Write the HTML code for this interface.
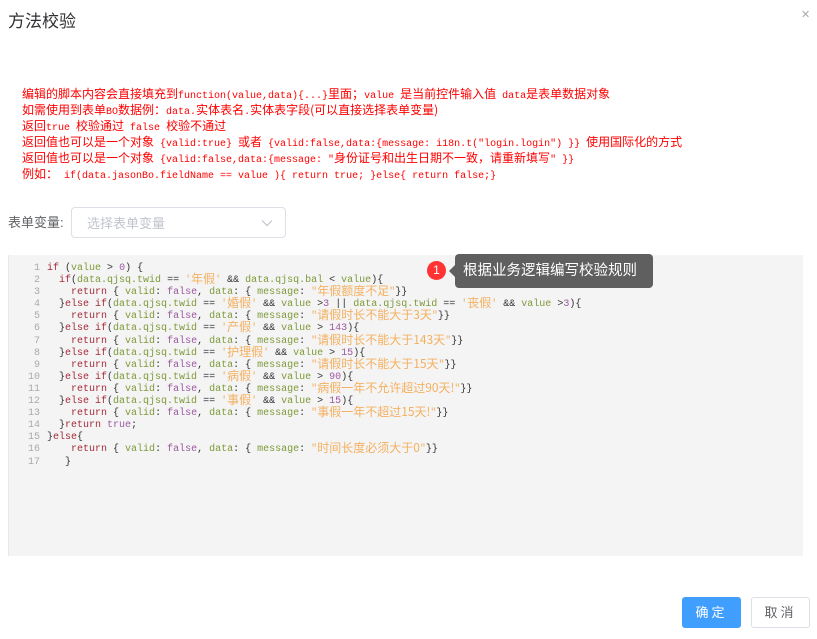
<!DOCTYPE html>
<html><head><meta charset="utf-8"><style>
*{margin:0;padding:0;box-sizing:border-box}
body{width:817px;height:639px;background:#fff;position:relative;overflow:hidden;font-family:"Liberation Sans","Noto Sans CJK SC",sans-serif}
.title{position:absolute;left:8px;top:7px;font-size:17px;color:#303133}
.close{position:absolute;left:801px;top:8px;font-size:11px;color:#aaa}
.tips{position:absolute;left:22px;top:89px;color:#f00;font-family:"Liberation Mono","Noto Sans CJK SC",monospace;font-size:10px;line-height:16px;white-space:pre}
i{font-style:normal;font-size:12px;line-height:8px;font-family:"Noto Sans CJK SC",sans-serif}
.lbl{position:absolute;left:8px;top:212px;font-size:13px;color:#606266}
.sel{position:absolute;left:71px;top:207px;width:215px;height:31px;border:1px solid #dcdfe6;border-radius:4px}
.sel span{position:absolute;left:15px;top:5px;font-size:13px;color:#c0c4cc}
.sel svg{position:absolute;right:12px;top:11px}
.code{position:absolute;left:8px;top:255px;width:795px;height:301px;background:#f4f4f4;border-left:1px solid #e8e8e8}
.code pre{position:absolute;left:0;top:8px;font-family:"Liberation Mono",monospace;font-size:10px;line-height:12.1px;color:#333}
.code i{display:inline-block;height:11px;line-height:11px;vertical-align:top;position:relative;top:-2px}
.n{color:#aaa;display:inline-block;width:31px;text-align:right;margin-right:7px}
.k{color:#a52a3a}.v{color:#7f9a3a}.s{color:#f4b060}.p{color:#9b59a0}
.tip{position:absolute;left:455px;top:254px;width:198px;height:34px;background:#5f5f5f;border-radius:4px;color:#fff;font-size:14.5px;line-height:34px;padding-left:8px}
.tip:before{content:"";position:absolute;left:-6px;top:11px;border:6px solid transparent;border-left:0;border-right-color:#5f5f5f}
.dot{position:absolute;left:427px;top:261px;width:19px;height:19px;border-radius:50%;background:#f33;color:#fff;font-size:12px;text-align:center;line-height:19px}
.btn{position:absolute;top:597px;width:59px;height:31px;border-radius:3px;font-size:13px;text-align:center;line-height:29px;letter-spacing:3px}
.ok{left:682px;background:#409eff;color:#fff;border:1px solid #409eff}
.no{left:751px;border:1px solid #dcdfe6;color:#606266}
</style></head><body>
<div class="title">方法校验</div>
<div class="close">✕</div>
<div class="tips"><i>编辑的脚本内容会直接填充到</i>function(value,data){...}<i>里面；</i>value <i>是当前控件输入值</i> data<i>是表单数据对象</i>
<i>如需使用到表单</i>BO<i>数据例：</i>data.<i>实体表名</i>.<i>实体表字段(可以直接选择表单变量)</i>
<i>返回</i>true <i>校验通过</i> false <i>校验不通过</i>
<i>返回值也可以是一个对象</i> {valid:true} <i>或者</i> {valid:false,data:{message: i18n.t("login.login") }} <i>使用国际化的方式</i>
<i>返回值也可以是一个对象</i> {valid:false,data:{message: "<i>身份证号和出生日期不一致，请重新填写</i>" }}
<i>例如：</i> if(data.jasonBo.fieldName == value ){ return true; }else{ return false;}</div>
<div class="lbl">表单变量:</div>
<div class="sel"><span>选择表单变量</span><svg width="12" height="8" viewBox="0 0 12 8"><path d="M1 1.5l5 5 5-5" fill="none" stroke="#c0c4cc" stroke-width="1.2"/></svg></div>
<div class="code"><pre><span class="n">1</span><span class="k">if</span> (<span class="v">value</span> &gt; <span class="p">0</span>) {
<span class="n">2</span>  <span class="k">if</span>(<span class="v">data.qjsq.twid</span> == <span class="s">'<i>年假</i>'</span> &amp;&amp; <span class="v">data.qjsq.bal</span> &lt; <span class="v">value</span>){
<span class="n">3</span>    <span class="k">return</span> { <span class="v">valid</span>: <span class="p">false</span>, <span class="v">data</span>: { <span class="v">message</span>: <span class="s">"<i>年假额度不足</i>"</span>}}
<span class="n">4</span>  }<span class="k">else if</span>(<span class="v">data.qjsq.twid</span> == <span class="s">'<i>婚假</i>'</span> &amp;&amp; <span class="v">value</span> &gt;<span class="p">3</span> || <span class="v">data.qjsq.twid</span> == <span class="s">'<i>丧假</i>'</span> &amp;&amp; <span class="v">value</span> &gt;<span class="p">3</span>){
<span class="n">5</span>    <span class="k">return</span> { <span class="v">valid</span>: <span class="p">false</span>, <span class="v">data</span>: { <span class="v">message</span>: <span class="s">"<i>请假时长不能大于3天</i>"</span>}}
<span class="n">6</span>  }<span class="k">else if</span>(<span class="v">data.qjsq.twid</span> == <span class="s">'<i>产假</i>'</span> &amp;&amp; <span class="v">value</span> &gt; <span class="p">143</span>){
<span class="n">7</span>    <span class="k">return</span> { <span class="v">valid</span>: <span class="p">false</span>, <span class="v">data</span>: { <span class="v">message</span>: <span class="s">"<i>请假时长不能大于143天</i>"</span>}}
<span class="n">8</span>  }<span class="k">else if</span>(<span class="v">data.qjsq.twid</span> == <span class="s">'<i>护理假</i>'</span> &amp;&amp; <span class="v">value</span> &gt; <span class="p">15</span>){
<span class="n">9</span>    <span class="k">return</span> { <span class="v">valid</span>: <span class="p">false</span>, <span class="v">data</span>: { <span class="v">message</span>: <span class="s">"<i>请假时长不能大于15天</i>"</span>}}
<span class="n">10</span>  }<span class="k">else if</span>(<span class="v">data.qjsq.twid</span> == <span class="s">'<i>病假</i>'</span> &amp;&amp; <span class="v">value</span> &gt; <span class="p">90</span>){
<span class="n">11</span>    <span class="k">return</span> { <span class="v">valid</span>: <span class="p">false</span>, <span class="v">data</span>: { <span class="v">message</span>: <span class="s">"<i>病假一年不允许超过90天!</i>"</span>}}
<span class="n">12</span>  }<span class="k">else if</span>(<span class="v">data.qjsq.twid</span> == <span class="s">'<i>事假</i>'</span> &amp;&amp; <span class="v">value</span> &gt; <span class="p">15</span>){
<span class="n">13</span>    <span class="k">return</span> { <span class="v">valid</span>: <span class="p">false</span>, <span class="v">data</span>: { <span class="v">message</span>: <span class="s">"<i>事假一年不超过15天!</i>"</span>}}
<span class="n">14</span>  }<span class="k">return</span> <span class="p">true</span>;
<span class="n">15</span>}<span class="k">else</span>{
<span class="n">16</span>    <span class="k">return</span> { <span class="v">valid</span>: <span class="p">false</span>, <span class="v">data</span>: { <span class="v">message</span>: <span class="s">"<i>时间长度必须大于0</i>"</span>}}
<span class="n">17</span>   }</pre></div>
<div class="dot">1</div>
<div class="tip">根据业务逻辑编写校验规则</div>
<div class="btn ok">确定</div>
<div class="btn no">取消</div>
</body></html>
